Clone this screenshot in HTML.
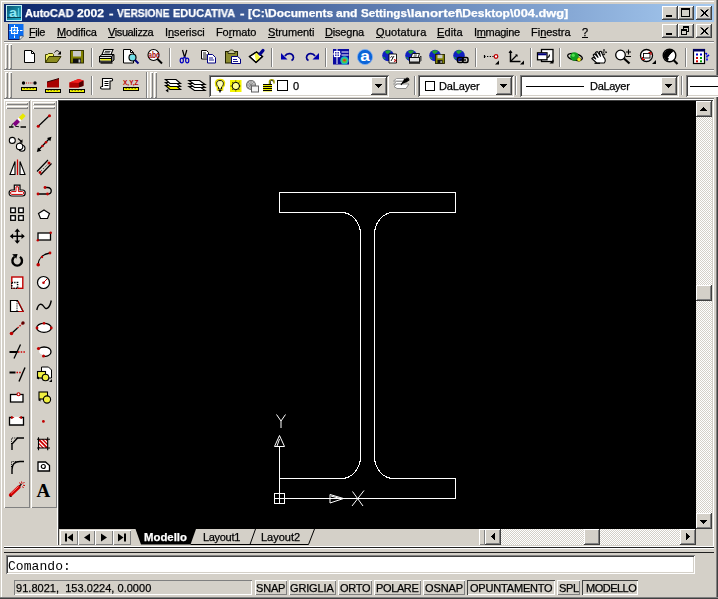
<!DOCTYPE html>
<html lang="it"><head><meta charset="utf-8"><title>AutoCAD 2002</title><style>
html,body{margin:0;padding:0;}
body{width:718px;height:599px;overflow:hidden;background:#D4D0C8;position:relative;font-family:"Liberation Sans",sans-serif;font-size:11px;}
div{position:absolute;box-sizing:border-box;}
svg.ic{position:absolute;overflow:visible;}
span.t{position:absolute;white-space:pre;will-change:transform;-webkit-text-stroke:0.25px currentColor;}
u{text-decoration:underline;}
</style></head>
<body>
<div class="frame" style="left:0px;top:0px;width:718px;height:599px;background:#D4D0C8;box-shadow:inset 1px 1px 0 #D4D0C8, inset 2px 2px 0 #fff;"></div>
<div style="left:714px;top:0px;width:4px;height:599px;background:#D4D0C8;box-shadow:inset -1px 0 0 #404040, inset -2px 0 0 #808080;"></div>
<div style="left:0px;top:597px;width:718px;height:2px;background:#808080;border-bottom:1px solid #404040;"></div>
<div class="title" style="left:4px;top:4px;width:710px;height:18px;background:linear-gradient(90deg,#0A246A,#A6CAF0);"></div>
<svg class="ic" style="left:6px;top:5px" width="16" height="16" viewBox="0 0 16 16"><defs><linearGradient id="ag" x1="0" y1="0" x2="1" y2="1"><stop offset="0" stop-color="#0A5470"/><stop offset="1" stop-color="#20B0CC"/></linearGradient></defs><rect x="0" y="0" width="16" height="16" fill="#BFEFF6"/><rect x="1" y="1" width="14" height="14" fill="url(#ag)"/><path d="M1 12.500h14" stroke="#0A4050" stroke-width="1"/><text x="3" y="12" font-family="Liberation Sans, sans-serif" font-weight="bold" font-size="13" textLength="8" lengthAdjust="spacingAndGlyphs" fill="#8FE8F4">a</text><path d="M12.500 3v9" stroke="#50C8DC" stroke-width="1.200"/></svg>
<span id="t0" class="t" style="left:24.5px;top:5.19px;font-size:11px;line-height:16px;color:#fff;letter-spacing:0.000px;font-weight:bold;transform:scaleX(0.9920);transform-origin:0 0;">AutoCAD</span>
<span id="t1" class="t" style="left:77px;top:5.19px;font-size:11px;line-height:16px;color:#fff;letter-spacing:0.000px;font-weight:bold;transform:scaleX(1.1027);transform-origin:0 0;">2002</span>
<span id="t2" class="t" style="left:108.5px;top:5.19px;font-size:11px;line-height:16px;color:#fff;letter-spacing:0.000px;font-weight:bold;transform:scaleX(1.2255);transform-origin:0 0;">-</span>
<span id="t3" class="t" style="left:116.5px;top:5.19px;font-size:11px;line-height:16px;color:#fff;letter-spacing:0.000px;font-weight:bold;transform:scaleX(0.9233);transform-origin:0 0;">VERSIONE</span>
<span id="t4" class="t" style="left:173px;top:5.19px;font-size:11px;line-height:16px;color:#fff;letter-spacing:0.000px;font-weight:bold;transform:scaleX(0.9945);transform-origin:0 0;">EDUCATIVA</span>
<span id="t5" class="t" style="left:240px;top:5.19px;font-size:11px;line-height:16px;color:#fff;letter-spacing:0.000px;font-weight:bold;transform:scaleX(1.2255);transform-origin:0 0;">-</span>
<span id="t6" class="t" style="left:247.7px;top:5.19px;font-size:11px;line-height:16px;color:#fff;letter-spacing:0.000px;font-weight:bold;transform:scaleX(1.0903);transform-origin:0 0;">[C:\Documents</span>
<span id="t7" class="t" style="left:335.5px;top:5.19px;font-size:11px;line-height:16px;color:#fff;letter-spacing:0.000px;font-weight:bold;transform:scaleX(1.0990);transform-origin:0 0;">and</span>
<span id="t8" class="t" style="left:360.6px;top:5.19px;font-size:11px;line-height:16px;color:#fff;letter-spacing:0.000px;font-weight:bold;transform:scaleX(1.0575);transform-origin:0 0;">Settings</span>
<span id="t9" class="t" style="left:406.5px;top:5.19px;font-size:11px;line-height:16px;color:#fff;letter-spacing:0.000px;font-weight:bold;transform:scaleX(1.2095);transform-origin:0 0;">\lanortef</span>
<span id="t10" class="t" style="left:459px;top:5.19px;font-size:11px;line-height:16px;color:#fff;letter-spacing:0.000px;font-weight:bold;transform:scaleX(1.0975);transform-origin:0 0;">\Desktop</span>
<span id="t11" class="t" style="left:510px;top:5.19px;font-size:11px;line-height:16px;color:#fff;letter-spacing:0.000px;font-weight:bold;transform:scaleX(1.1631);transform-origin:0 0;">\004.dwg]</span>
<div style="left:662px;top:6px;width:16px;height:14px;background:#D4D0C8;box-shadow:inset -1px -1px 0 #404040, inset 1px 1px 0 #fff, inset -2px -2px 0 #808080;"></div>
<svg class="ic" style="left:662px;top:6px" width="16" height="14" viewBox="0 0 16 14"><rect x="4" y="9" width="6" height="2" fill="#000" shape-rendering="crispEdges"/></svg>
<div style="left:678px;top:6px;width:16px;height:14px;background:#D4D0C8;box-shadow:inset -1px -1px 0 #404040, inset 1px 1px 0 #fff, inset -2px -2px 0 #808080;"></div>
<svg class="ic" style="left:678px;top:6px" width="16" height="14" viewBox="0 0 16 14"><path d="M3 2h9v9h-9z M4 4v6h7v-6z" fill="#000" fill-rule="evenodd" shape-rendering="crispEdges"/></svg>
<div style="left:696px;top:6px;width:16px;height:14px;background:#D4D0C8;box-shadow:inset -1px -1px 0 #404040, inset 1px 1px 0 #fff, inset -2px -2px 0 #808080;"></div>
<svg class="ic" style="left:696px;top:6px" width="16" height="14" viewBox="0 0 16 14"><path d="M4.5 3.5l7 7M5.5 3.5l7 7M11.5 3.5l-7 7M12.5 3.5l-7 7" stroke="#000" stroke-width="1" fill="none"/></svg>
<div class="menubar" style="left:4px;top:22px;width:710px;height:20px;background:#D4D0C8;"></div>
<svg class="ic" style="left:8px;top:24px" width="16" height="16" viewBox="0 0 16 16"><path d="M0 0h15.500v12l-4 4h-11.500z" fill="#0A6CF0"/><path d="M0.500 0v15.500h11" fill="none" stroke="#101860" stroke-width="1"/><path d="M3.500 3.500h6v6h-6z" fill="#2A8CFF" stroke="#fff" stroke-width="1.100"/><path d="M6.500 1v14M1.500 6.500h13" stroke="#fff" stroke-width="1" stroke-dasharray="2.500 1"/><path d="M11.500 16v-4h4z" fill="#F0F0F0" stroke="#404040" stroke-width="0.600"/></svg>
<span id="t12" class="t" style="left:28.5px;top:24.19px;font-size:11px;line-height:16px;color:#000;letter-spacing:-0.438px;"><u>F</u>ile</span>
<span id="t13" class="t" style="left:56.5px;top:24.19px;font-size:11px;line-height:16px;color:#000;letter-spacing:-0.146px;"><u>M</u>odifica</span>
<span id="t14" class="t" style="left:107.7px;top:24.19px;font-size:11px;line-height:16px;color:#000;letter-spacing:-0.403px;"><u>V</u>isualizza</span>
<span id="t15" class="t" style="left:165px;top:24.19px;font-size:11px;line-height:16px;color:#000;letter-spacing:-0.073px;">I<u>n</u>serisci</span>
<span id="t16" class="t" style="left:215.7px;top:24.19px;font-size:11px;line-height:16px;color:#000;letter-spacing:-0.098px;">Fo<u>r</u>mato</span>
<span id="t17" class="t" style="left:267.5px;top:24.19px;font-size:11px;line-height:16px;color:#000;letter-spacing:-0.066px;"><u>S</u>trumenti</span>
<span id="t18" class="t" style="left:325px;top:24.19px;font-size:11px;line-height:16px;color:#000;letter-spacing:-0.196px;"><u>D</u>isegna</span>
<span id="t19" class="t" style="left:375.5px;top:24.19px;font-size:11px;line-height:16px;color:#000;letter-spacing:0.174px;"><u>Q</u>uotatura</span>
<span id="t20" class="t" style="left:436.8px;top:24.19px;font-size:11px;line-height:16px;color:#000;letter-spacing:0.121px;"><u>E</u>dita</span>
<span id="t21" class="t" style="left:473.9px;top:24.19px;font-size:11px;line-height:16px;color:#000;letter-spacing:-0.314px;">I<u>m</u>magine</span>
<span id="t22" class="t" style="left:531.4px;top:24.19px;font-size:11px;line-height:16px;color:#000;letter-spacing:-0.021px;">Fi<u>n</u>estra</span>
<span id="t23" class="t" style="left:582px;top:24.19px;font-size:11px;line-height:16px;color:#000;letter-spacing:-0.125px;"><u>?</u></span>
<div style="left:662px;top:24px;width:16px;height:14px;background:#D4D0C8;box-shadow:inset -1px -1px 0 #404040, inset 1px 1px 0 #fff, inset -2px -2px 0 #808080;"></div>
<svg class="ic" style="left:662px;top:24px" width="16" height="14" viewBox="0 0 16 14"><rect x="4" y="9" width="6" height="2" fill="#000" shape-rendering="crispEdges"/></svg>
<div style="left:678px;top:24px;width:16px;height:14px;background:#D4D0C8;box-shadow:inset -1px -1px 0 #404040, inset 1px 1px 0 #fff, inset -2px -2px 0 #808080;"></div>
<svg class="ic" style="left:678px;top:24px" width="16" height="14" viewBox="0 0 16 14"><path d="M5 2h6v6h-6z M6 4v3h4v-3z" fill="#000" fill-rule="evenodd" shape-rendering="crispEdges"/><path d="M3 5h6v6h-6z M4 7v3h4v-3z" fill="#000" fill-rule="evenodd" shape-rendering="crispEdges"/><rect x="4" y="7" width="4" height="3" fill="#D4D0C8" shape-rendering="crispEdges"/></svg>
<div style="left:696px;top:24px;width:16px;height:14px;background:#D4D0C8;box-shadow:inset -1px -1px 0 #404040, inset 1px 1px 0 #fff, inset -2px -2px 0 #808080;"></div>
<svg class="ic" style="left:696px;top:24px" width="16" height="14" viewBox="0 0 16 14"><path d="M4.5 3.5l7 7M5.5 3.5l7 7M11.5 3.5l-7 7M12.5 3.5l-7 7" stroke="#000" stroke-width="1" fill="none"/></svg>
<div style="left:4px;top:41px;width:710px;height:1px;background:#808080"></div>
<div style="left:4px;top:42px;width:710px;height:1px;background:#fff"></div>
<div style="left:5px;top:44px;width:3px;height:25px;box-shadow:inset 1px 1px 0 #fff, inset -1px -1px 0 #808080;"></div>
<div style="left:9px;top:44px;width:3px;height:25px;box-shadow:inset 1px 1px 0 #fff, inset -1px -1px 0 #808080;"></div>
<svg class="ic" style="left:22px;top:49px" width="16" height="16" viewBox="0 0 16 16"><path d="M2.5 1.5h7l3 3v9h-10z" fill="#fff" stroke="#000"/><path d="M9.5 1.5v3h3" fill="none" stroke="#000"/></svg>
<svg class="ic" style="left:45px;top:49px" width="16" height="16" viewBox="0 0 16 16"><path d="M0.5 13.5v-8h2l1-1h4l1 1v2" fill="#F0F060" stroke="#404000"/><path d="M0.5 13.5l3.5-6h12l-4 6z" fill="#8C8C20" stroke="#303000"/><path d="M9.5 3.5c1.5-2.5 4-2.5 5 0" fill="none" stroke="#000"/><path d="M16 2v3.5h-3.5z" fill="#000"/></svg>
<svg class="ic" style="left:69px;top:49px" width="16" height="16" viewBox="0 0 16 16"><rect x="1.5" y="1.5" width="13" height="12.500" fill="#808000" stroke="#303000"/><rect x="4" y="2" width="8" height="5.500" fill="#C8C8C8"/><rect x="4" y="9.500" width="8" height="4.500" fill="#101010"/><rect x="9.500" y="10.500" width="1.800" height="3" fill="#C0C0C0"/></svg>
<svg class="ic" style="left:99px;top:49px" width="16" height="16" viewBox="0 0 16 16"><path d="M5 0.500h9l-2 5h-9z" fill="#fff" stroke="#000" stroke-width="1.100"/><path d="M6 2.300h5.500M5.300 3.900h5.500" stroke="#000" stroke-width="0.900"/><path d="M0.500 7.500l2.500-2h12l-2.500 2z" fill="#C8C8C8" stroke="#000" stroke-width="1"/><rect x="0.500" y="7.500" width="12" height="5.500" fill="#E4E4E4" stroke="#000" stroke-width="1"/><path d="M12.500 7.500l2.500-2v5.500l-2.500 2z" fill="#808080" stroke="#000" stroke-width="1"/><path d="M1 9.500h11M1 12h11" stroke="#000" stroke-width="1"/><path d="M1.500 10.750h10.500" stroke="#F0F000" stroke-width="1.300"/><path d="M1.500 14h12" stroke="#000" stroke-width="1.300"/></svg>
<svg class="ic" style="left:123px;top:49px" width="16" height="16" viewBox="0 0 16 16"><path d="M0.500 0.500h7l3 3v10.500h-10z" fill="#fff" stroke="#000"/><path d="M7.500 0.500v3h3" fill="none" stroke="#000"/><circle cx="9.500" cy="8.500" r="3.500" fill="#70E0E8" stroke="#000" stroke-width="1.200"/><path d="M12 11l3.500 3.500" stroke="#000080" stroke-width="2"/></svg>
<svg class="ic" style="left:147px;top:49px" width="16" height="16" viewBox="0 0 16 16"><circle cx="6.500" cy="6" r="5.500" fill="#fff" stroke="#000" stroke-width="1.100"/><path d="M10.500 10l4.500 4.500" stroke="#000" stroke-width="2"/><text x="1.200" y="9" font-family="Liberation Sans, sans-serif" font-weight="bold" font-size="8.500" fill="#A00000" textLength="11.500" lengthAdjust="spacingAndGlyphs">abc</text></svg>
<svg class="ic" style="left:177px;top:49px" width="16" height="16" viewBox="0 0 16 16"><path d="M5.500 1l2.300 8M9.800 1l-2.300 8" stroke="#000" stroke-width="1.200" fill="none"/><ellipse cx="4.800" cy="11.500" rx="1.600" ry="2.300" fill="none" stroke="#0000C0" stroke-width="1.200"/><ellipse cx="10.200" cy="11.500" rx="1.600" ry="2.300" fill="none" stroke="#0000C0" stroke-width="1.200"/><path d="M6 9.500l1.500-1.500 1.500 1.500" stroke="#0000C0" stroke-width="1.200" fill="none"/></svg>
<svg class="ic" style="left:201px;top:49px" width="16" height="16" viewBox="0 0 16 16"><path d="M0.500 1.500h5l2 2v6.500h-7z" fill="#fff" stroke="#000"/><path d="M2 4h3M2 6h4M2 8h4" stroke="#000" stroke-width="0.900"/><path d="M6.500 5.500h5l3 3v5.500h-8z" fill="#fff" stroke="#000080"/><path d="M8 9h4M8 11h5" stroke="#000080" stroke-width="0.900"/></svg>
<svg class="ic" style="left:225px;top:49px" width="16" height="16" viewBox="0 0 16 16"><rect x="0.500" y="2.500" width="12" height="11.500" fill="#8C8C30" stroke="#202000"/><path d="M4 2.500c0-2 5-2 5 0h1v2h-7v-2z" fill="#C8C8A0" stroke="#202000" stroke-width="0.800"/><path d="M6.500 7.500h6l3 2.500v4.500h-9z" fill="#fff" stroke="#000080"/><path d="M8 10.500h4M8 12.500h5" stroke="#000080" stroke-width="0.900"/></svg>
<svg class="ic" style="left:249px;top:49px" width="16" height="16" viewBox="0 0 16 16"><path d="M0.500 7.500L7.500 3l6 4.500L7 13.500z" fill="#fff" stroke="#000" stroke-width="1.200"/><path d="M5.500 5l2.500-1.300 3.200 5.300-4 3.800z" fill="#F4F440"/><path d="M0.500 7.500L7.500 3l6 4.500L7 13.500z" fill="none" stroke="#000" stroke-width="1.200"/><path d="M11 5l3-3.500" stroke="#000090" stroke-width="3.200" stroke-linecap="round"/></svg>
<svg class="ic" style="left:280px;top:49px" width="16" height="16" viewBox="0 0 16 16"><path d="M1 4v6.500h6.500z" fill="#0000B0"/><path d="M5 7c2-3.500 8-3.500 8.500 1.500 0 1.500-1 2.500-2 3" fill="none" stroke="#000090" stroke-width="1.700"/></svg>
<svg class="ic" style="left:304px;top:49px" width="16" height="16" viewBox="0 0 16 16"><path d="M15 4v6.500h-6.500z" fill="#0000B0"/><path d="M11 7c-2-3.500-8-3.500-8.500 1.500 0 1.500 1 2.500 2 3" fill="none" stroke="#000090" stroke-width="1.700"/></svg>
<svg class="ic" style="left:333px;top:49px" width="16" height="16" viewBox="0 0 16 16"><rect x="0" y="0" width="16" height="15.500" fill="#0A0AA0"/><rect x="1.500" y="2.500" width="5" height="5" fill="none" stroke="#fff" stroke-width="1.200"/><path d="M4 0v15M0 5h8M8.500 3h7M8.500 6h7" stroke="#fff" stroke-width="1"/><circle cx="11.500" cy="11.500" r="4.200" fill="#20B0C0"/><circle cx="11.500" cy="11.500" r="2.600" fill="#50D040"/><circle cx="11.500" cy="11.300" r="1.300" fill="#E04020"/></svg>
<svg class="ic" style="left:357px;top:49px" width="16" height="16" viewBox="0 0 16 16"><circle cx="8" cy="8" r="7.600" fill="#0A64D8"/><circle cx="8" cy="8" r="7.600" fill="none" stroke="#80B0F0" stroke-width="0.800"/><text x="3.200" y="12.300" font-family="Liberation Sans, sans-serif" font-weight="bold" font-size="14" textLength="9.600" lengthAdjust="spacingAndGlyphs" fill="#fff">a</text></svg>
<svg class="ic" style="left:382px;top:49px" width="16" height="16" viewBox="0 0 16 16"><circle cx="6" cy="6.500" r="5.800" fill="#1020C0"/><path d="M3 2.500c2-2 5-1.500 6 0-1 1.500-2 1-3 2.500-1.500 0-2-1-3-2.500z" fill="#20A030"/><path d="M1 8c1.500-0.500 2.500 1 2.500 2.500-1-0.500-2-1-2.500-2.500z" fill="#20A030"/><path d="M7 5h7.500v9h-7.500z" fill="#fff" stroke="#000" stroke-width="0.900"/><path d="M9 12l3-5M8.500 8.500c1-1.500 2-1 2 0" stroke="#000" stroke-width="0.900" fill="none"/><path d="M12 10l2.500 3M14.500 10l-2.500 3" stroke="#C00000" stroke-width="0.900"/></svg>
<svg class="ic" style="left:405px;top:49px" width="16" height="16" viewBox="0 0 16 16"><circle cx="6" cy="6.500" r="5.800" fill="#1020C0"/><path d="M3 2.500c2-2 5-1.500 6 0-1 1.500-2 1-3 2.500-1.500 0-2-1-3-2.500z" fill="#20A030"/><path d="M1 8c1.500-0.500 2.500 1 2.500 2.500-1-0.500-2-1-2.500-2.500z" fill="#20A030"/><path d="M6 8.500l1.500-4h7l-1.500 4z" fill="#fff" stroke="#000" stroke-width="0.900"/><rect x="4.500" y="8.500" width="10" height="4.500" fill="#E0E0E0" stroke="#000" stroke-width="0.900"/><path d="M14.500 8.500l1.500-1.500v4.500l-1.500 1.500z" fill="#888" stroke="#000" stroke-width="0.700"/><path d="M4 14h11" stroke="#000" stroke-width="1.400"/><path d="M9 6h3M8.500 7.200h3" stroke="#000" stroke-width="0.600"/></svg>
<svg class="ic" style="left:429px;top:49px" width="16" height="16" viewBox="0 0 16 16"><circle cx="6" cy="6.500" r="5.800" fill="#1020C0"/><path d="M3 2.500c2-2 5-1.500 6 0-1 1.500-2 1-3 2.500-1.500 0-2-1-3-2.500z" fill="#20A030"/><path d="M1 8c1.500-0.500 2.500 1 2.500 2.500-1-0.500-2-1-2.500-2.500z" fill="#20A030"/><rect x="6.500" y="5.500" width="9" height="9" fill="#808000" stroke="#202000" stroke-width="0.900"/><rect x="8.500" y="5.800" width="5" height="3.500" fill="#C8C8C8"/><rect x="8.500" y="11" width="5" height="3.500" fill="#101010"/><rect x="11.500" y="11.800" width="1.200" height="2.200" fill="#C0C0C0"/></svg>
<svg class="ic" style="left:453px;top:49px" width="16" height="16" viewBox="0 0 16 16"><circle cx="6" cy="6.500" r="5.800" fill="#1020C0"/><path d="M3 2.500c2-2 5-1.500 6 0-1 1.500-2 1-3 2.500-1.500 0-2-1-3-2.500z" fill="#20A030"/><path d="M1 8c1.500-0.500 2.500 1 2.500 2.500-1-0.500-2-1-2.500-2.500z" fill="#20A030"/><rect x="4.500" y="8.500" width="5.500" height="5" rx="1.500" fill="none" stroke="#000" stroke-width="1.500"/><rect x="9.500" y="8.500" width="5.500" height="5" rx="1.500" fill="none" stroke="#000" stroke-width="1.500"/><path d="M6.500 11h6.500" stroke="#000" stroke-width="1.400"/></svg>
<svg class="ic" style="left:483px;top:49px" width="16" height="16" viewBox="0 0 16 16"><path d="M1 7.500h1.500M4 7.500h1.300M6.700 7.500h1.300M9.400 7.500h1.300" stroke="#000" stroke-width="1.200"/><path d="M1.500 6v3" stroke="#000" stroke-width="1.200"/><circle cx="13" cy="7.500" r="1.800" fill="#fff" stroke="#C00000" stroke-width="1.300"/><path d="M16 11.500v4h-4z" fill="#000"/></svg>
<svg class="ic" style="left:508px;top:49px" width="16" height="16" viewBox="0 0 16 16"><path d="M2.500 2v10.500h10" fill="none" stroke="#000" stroke-width="1.500"/><path d="M0.500 4l2-3 2 3z" fill="#000"/><path d="M3 12l6-6" stroke="#000" stroke-width="1.200"/><path d="M7 5.500h2.500v2.500z" fill="#000"/><path d="M16 11.500v4h-4z" fill="#000"/></svg>
<svg class="ic" style="left:537px;top:49px" width="16" height="16" viewBox="0 0 16 16"><rect x="4.500" y="0.500" width="11.500" height="12" fill="#fff" stroke="#000" stroke-width="1.300"/><rect x="0.500" y="3.800" width="9.500" height="7" fill="#fff" stroke="#000" stroke-width="1.300"/><rect x="1" y="4.300" width="8.500" height="2" fill="#000080"/><path d="M10 8.500c2 0 2.500-1 2.500-3" fill="none" stroke="#000" stroke-width="1.100"/><path d="M16.500 10.500v4h-4z" fill="#000"/></svg>
<svg class="ic" style="left:567px;top:49px" width="16" height="16" viewBox="0 0 16 16"><ellipse cx="8" cy="8" rx="7.500" ry="3.200" fill="none" stroke="#000" stroke-width="1.300" transform="rotate(12 8 8)"/><circle cx="7.500" cy="7.500" r="4.300" fill="#10A020"/><circle cx="6.300" cy="6.300" r="1.600" fill="#50E050"/><circle cx="12" cy="10.500" r="2" fill="#F0F020" stroke="#404000" stroke-width="0.500"/></svg>
<svg class="ic" style="left:591px;top:49px" width="16" height="16" viewBox="0 0 16 16"><path d="M0.800 9.500l1.700-1.300 2.300 1.800-2.600-4 1.500-1.200 3.300 3.500-2.500-4.800 1.700-1 3.300 4.800-1.300-4.500 1.800-0.500 2.500 5.500c2 2 2.300 4.200 0.700 6.200h-7.500z" fill="#fff" stroke="#000" stroke-width="1.100" stroke-linejoin="round"/><path d="M3.500 14.300h5.500" stroke="#000" stroke-width="1.200"/><path d="M13 0.500v5.500M10.200 3.200h5.600" stroke="#000" stroke-width="0.900" stroke-dasharray="1 0.800"/><path d="M13 0l-1.200 1.500h2.400zM13 6.500l-1.200-1.500h2.400zM9.800 3.200l1.500-1.200v2.400zM16.200 3.200l-1.500-1.200v2.400z" fill="#000"/></svg>
<svg class="ic" style="left:615px;top:49px" width="16" height="16" viewBox="0 0 16 16"><circle cx="5.500" cy="6" r="4.800" fill="#fff" stroke="#000" stroke-width="1.300"/><path d="M9 9.500l5.500 5" stroke="#000" stroke-width="2.200"/><path d="M11 3h5M13.500 0.500v5M11 7.500h5" stroke="#000" stroke-width="1.100"/></svg>
<svg class="ic" style="left:640px;top:49px" width="16" height="16" viewBox="0 0 16 16"><circle cx="6.500" cy="6.500" r="6" fill="#fff" stroke="#000" stroke-width="1.300"/><rect x="3.500" y="4.500" width="6.500" height="4.500" fill="none" stroke="#000" stroke-width="0.900"/><path d="M8.500 3.500h2.500v2.500M2.500 8v2.500h2.500" fill="none" stroke="#D00000" stroke-width="1.100"/><path d="M16 11v4h-4z" fill="#000"/></svg>
<svg class="ic" style="left:662px;top:49px" width="16" height="16" viewBox="0 0 16 16"><circle cx="7.500" cy="6.500" r="6.300" fill="#fff" stroke="#000" stroke-width="1.400"/><path d="M7.500 6.500l4-4.500a6 6 0 0 0-9.500 6.500c1 2 2.500 3.500 4 3.500z" fill="#000"/><path d="M6 9l4-5" stroke="#fff" stroke-width="1"/><path d="M11.500 11l4 4" stroke="#000" stroke-width="2.200"/></svg>
<svg class="ic" style="left:693px;top:49px" width="16" height="16" viewBox="0 0 16 16"><rect x="0.500" y="0.500" width="11" height="14" fill="#fff" stroke="#000" stroke-width="1.200"/><rect x="0" y="0" width="12" height="2.500" fill="#000060"/><rect x="3" y="4.500" width="2" height="2" fill="#0000D0"/><rect x="7" y="4.500" width="2" height="2" fill="#0000D0"/><rect x="3" y="8" width="2" height="2" fill="#D00000"/><rect x="7" y="8" width="2" height="2" fill="#00A000"/><rect x="3" y="11.300" width="2" height="2" fill="#D00000"/><rect x="7" y="11.300" width="2" height="2" fill="#00A000"/><path d="M12.500 4l3.500 3M14 6.500v6" stroke="#0000E0" stroke-width="1.600" stroke-dasharray="2 1"/></svg>
<div style="left:91px;top:48px;width:2px;height:19px;border-left:1px solid #808080;border-right:1px solid #fff;"></div>
<div style="left:169px;top:48px;width:2px;height:19px;border-left:1px solid #808080;border-right:1px solid #fff;"></div>
<div style="left:271px;top:48px;width:2px;height:19px;border-left:1px solid #808080;border-right:1px solid #fff;"></div>
<div style="left:325px;top:48px;width:2px;height:19px;border-left:1px solid #808080;border-right:1px solid #fff;"></div>
<div style="left:475px;top:48px;width:2px;height:19px;border-left:1px solid #808080;border-right:1px solid #fff;"></div>
<div style="left:530px;top:48px;width:2px;height:19px;border-left:1px solid #808080;border-right:1px solid #fff;"></div>
<div style="left:559px;top:48px;width:2px;height:19px;border-left:1px solid #808080;border-right:1px solid #fff;"></div>
<div style="left:685px;top:48px;width:2px;height:19px;border-left:1px solid #808080;border-right:1px solid #fff;"></div>
<div style="left:4px;top:69px;width:710px;height:1px;background:#808080"></div>
<div style="left:4px;top:70px;width:710px;height:1px;background:#fff"></div>
<div style="left:5px;top:72px;width:3px;height:26px;box-shadow:inset 1px 1px 0 #fff, inset -1px -1px 0 #808080;"></div>
<div style="left:9px;top:72px;width:3px;height:26px;box-shadow:inset 1px 1px 0 #fff, inset -1px -1px 0 #808080;"></div>
<div style="left:146px;top:72px;width:2px;height:26px;border-left:1px solid #808080;border-right:1px solid #fff;"></div>
<svg class="ic" style="left:21px;top:77px" width="16" height="16" viewBox="0 0 16 16"><circle cx="2.500" cy="6" r="1.700" fill="#000"/><circle cx="14" cy="6" r="1.700" fill="#000"/><path d="M5 6h7" stroke="#C00000" stroke-width="1.200" stroke-dasharray="1 1.200"/><rect x="0.5" y="10.5" width="15" height="3" fill="#F0F000" stroke="#000" stroke-width="1"/><path d="M2.5 11.5h11" stroke="#808000" stroke-width="1" stroke-dasharray="1.500 1.500"/></svg>
<svg class="ic" style="left:45px;top:77px" width="16" height="16" viewBox="0 0 16 16"><path d="M2 10.500v-5.500l12-3.500v9z" fill="#A80000"/><path d="M2 5l12-3.500" stroke="#300000" stroke-width="1"/><rect x="0.5" y="12.5" width="15" height="3" fill="#F0F000" stroke="#000" stroke-width="1"/><path d="M2.5 13.5h11" stroke="#808000" stroke-width="1" stroke-dasharray="1.500 1.500"/></svg>
<svg class="ic" style="left:69px;top:77px" width="16" height="16" viewBox="0 0 16 16"><path d="M0.500 10.500v-5l9-3.500 5 1.500v5l-5 2z" fill="#E00000"/><path d="M0.500 5.500l9-3.500 5 1.500-5 2.500z" fill="#F02020"/><path d="M9.500 6l5-2.500v5.500l-5 1.500z" fill="#500000"/><path d="M0.500 5.500v5h9v-4.500z" fill="#B00000"/><rect x="0.5" y="12.5" width="15" height="3" fill="#F0F000" stroke="#000" stroke-width="1"/><path d="M2.5 13.5h11" stroke="#808000" stroke-width="1" stroke-dasharray="1.500 1.500"/></svg>
<svg class="ic" style="left:99px;top:77px" width="16" height="16" viewBox="0 0 16 16"><path d="M3.500 1.500h9c1.500 0 1.500 2.500 0 2.500h-1.500v8h-8c-2 0-2-2.500 0-2.500h0.500z" fill="#fff" stroke="#000" stroke-width="1.100"/><path d="M5.500 4.500h4M5.500 6.500h4M5.500 8.500h4" stroke="#000" stroke-width="1"/></svg>
<svg class="ic" style="left:123px;top:77px" width="16" height="16" viewBox="0 0 16 16"><text x="0" y="7.500" font-family="Liberation Sans, sans-serif" font-weight="bold" font-size="7" fill="#C00000" textLength="15.500" lengthAdjust="spacingAndGlyphs">X,Y,Z</text><rect x="0.5" y="10.5" width="15" height="3" fill="#F0F000" stroke="#000" stroke-width="1"/><path d="M2.5 11.5h11" stroke="#808000" stroke-width="1" stroke-dasharray="1.500 1.500"/></svg>
<div style="left:91px;top:76px;width:2px;height:19px;border-left:1px solid #808080;border-right:1px solid #fff;"></div>
<div style="left:150px;top:72px;width:3px;height:26px;box-shadow:inset 1px 1px 0 #fff, inset -1px -1px 0 #808080;"></div>
<div style="left:154px;top:72px;width:3px;height:26px;box-shadow:inset 1px 1px 0 #fff, inset -1px -1px 0 #808080;"></div>
<div style="left:4px;top:98px;width:710px;height:1px;background:#808080"></div>
<div style="left:4px;top:99px;width:710px;height:1px;background:#fff"></div>
<svg class="ic" style="left:164px;top:77px" width="16" height="16" viewBox="0 0 16 16"><path d="M1.5 8.5h10.5l4.5 4h-10.5z" fill="#F4F400" stroke="#000" stroke-width="1.2"/><path d="M1.5 5.5h10.5l4.5 4h-10.5z" fill="#fff" stroke="#000" stroke-width="1.2"/><path d="M1.5 2.5h10.5l4.5 4h-10.5z" fill="#fff" stroke="#000" stroke-width="1.2"/><path d="M1.500 13.500l2.800-1.800v3.800z" fill="#000"/></svg>
<svg class="ic" style="left:188px;top:77px" width="16" height="16" viewBox="0 0 16 16"><path d="M1 9.5h10.5l5.5 4h-10.5z" fill="#fff" stroke="#000" stroke-width="1.2"/><path d="M1 6.5h10.5l5.5 4h-10.5z" fill="#fff" stroke="#000" stroke-width="1.2"/><path d="M1 3.5h10.5l5.5 4h-10.5z" fill="#fff" stroke="#000" stroke-width="1.2"/></svg>
<div style="left:209px;top:75px;width:180px;height:22px;background:#fff;box-shadow:inset 1px 1px 0 #808080, inset -1px -1px 0 #fff, inset 2px 2px 0 #404040, inset -2px -2px 0 #D4D0C8;"></div>
<svg class="ic" style="left:214px;top:78px" width="16" height="16" viewBox="0 0 16 16"><path d="M6 1.500c-6 0-5 6-2.500 8v2.500h5v-2.500c2.500-2 3.500-8-2.500-8z" fill="#FFFF60" stroke="#E8E000" stroke-width="1.600"/><path d="M6 2.500c-4.500 0-4 5-1.500 6.500v2h3v-2c2.500-1.500 3-6.500-1.500-6.500z" fill="#FFFFB0" stroke="#000" stroke-width="0.900"/><path d="M4.500 12.500h3M5 13.800h2" stroke="#000" stroke-width="1"/></svg>
<svg class="ic" style="left:229px;top:78px" width="16" height="16" viewBox="0 0 16 16"><rect x="1" y="2" width="11.500" height="12" fill="#F4F400"/><circle cx="6.800" cy="8" r="3.700" fill="#FFFF90" stroke="#000" stroke-width="1"/><path d="M6.800 2.500v2M6.800 11.500v2M1.500 8h2M10 8h2M3 4l1.500 1.500M10.500 4l-1.500 1.500M3 12l1.500-1.500M10.500 12l-1.500-1.500" stroke="#000" stroke-width="0.800" stroke-dasharray="1 0.600"/></svg>
<svg class="ic" style="left:245px;top:78px" width="16" height="16" viewBox="0 0 16 16"><circle cx="6" cy="7" r="4.500" fill="#C8C8C8" stroke="#707070" stroke-width="1.100"/><path d="M6 2.500v9M1.500 7h9M3 4l6 6M9 4l-6 6" stroke="#808080" stroke-width="0.700"/><rect x="6.500" y="8" width="7" height="6" fill="#F4F4F4" stroke="#606060" stroke-width="1"/></svg>
<svg class="ic" style="left:261px;top:78px" width="16" height="16" viewBox="0 0 16 16"><path d="M8.500 6v-2.500c0-2.500 4.500-2.500 4.500 0v2" fill="none" stroke="#A0A000" stroke-width="1.500"/><path d="M9.500 6v-2.500c0-1.500 2.500-1.500 2.500 0" fill="none" stroke="#000" stroke-width="0.700"/><rect x="2" y="6" width="9" height="7.500" fill="#E8E800"/><path d="M2 6.500h9M2 8.500h9M2 10.500h9M2 12.500h9" stroke="#000" stroke-width="1"/></svg>
<div style="left:277px;top:80px;width:11px;height:11px;background:#fff;border:1px solid #000;"></div>
<span id="t24" class="t" style="left:292.5px;top:78.19px;font-size:11px;line-height:16px;color:#000;letter-spacing:-0.125px;">0</span>
<div style="left:371px;top:77px;width:16px;height:18px;background:#D4D0C8;box-shadow:inset -1px -1px 0 #404040, inset 1px 1px 0 #fff, inset -2px -2px 0 #808080;"></div>
<svg class="ic" style="left:371px;top:77px" width="16" height="16" viewBox="0 0 16 16"><path d="M4 7h7v1h-7zM5 8h5v1h-5zM6 9h3v1h-3zM7 10h1v1h-1z" fill="#000" shape-rendering="crispEdges"/></svg>
<svg class="ic" style="left:393px;top:77px" width="16" height="16" viewBox="0 0 16 16"><path d="M0.500 4l3-2.500h9l-3 2.500z" fill="#fff" stroke="#909090" stroke-width="0.900"/><path d="M0.500 7l3-2.500h9l-3 2.500z" fill="#fff" stroke="#909090" stroke-width="0.900"/><path d="M1 9.500l3-2.500h12l-3 4.500h-9z" fill="#fff" stroke="#808080" stroke-width="0.900"/><path d="M8.500 7l3-5.500 4 0.500-1 3z" fill="#000"/><path d="M13 1.500c2-1 3.500 0.500 2.500 2.500" fill="none" stroke="#000" stroke-width="1.200"/><path d="M8 8l2-3" stroke="#000" stroke-width="1.200"/></svg>
<div style="left:414px;top:76px;width:2px;height:19px;border-left:1px solid #808080;border-right:1px solid #fff;"></div>
<div style="left:418px;top:75px;width:96px;height:22px;background:#fff;box-shadow:inset 1px 1px 0 #808080, inset -1px -1px 0 #fff, inset 2px 2px 0 #404040, inset -2px -2px 0 #D4D0C8;"></div>
<div style="left:425px;top:81px;width:10px;height:10px;background:#fff;border:1px solid #000;"></div>
<span id="t25" class="t" style="left:438.5px;top:78.19px;font-size:11px;line-height:16px;color:#000;letter-spacing:-0.154px;">DaLayer</span>
<div style="left:496px;top:77px;width:16px;height:18px;background:#D4D0C8;box-shadow:inset -1px -1px 0 #404040, inset 1px 1px 0 #fff, inset -2px -2px 0 #808080;"></div>
<svg class="ic" style="left:496px;top:77px" width="16" height="16" viewBox="0 0 16 16"><path d="M4 7h7v1h-7zM5 8h5v1h-5zM6 9h3v1h-3zM7 10h1v1h-1z" fill="#000" shape-rendering="crispEdges"/></svg>
<div style="left:515px;top:76px;width:2px;height:19px;border-left:1px solid #808080;border-right:1px solid #fff;"></div>
<div style="left:520px;top:75px;width:159px;height:22px;background:#fff;box-shadow:inset 1px 1px 0 #808080, inset -1px -1px 0 #fff, inset 2px 2px 0 #404040, inset -2px -2px 0 #D4D0C8;"></div>
<div style="left:526px;top:86px;width:58px;height:1px;background:#000"></div>
<span id="t26" class="t" style="left:589.5px;top:78.19px;font-size:11px;line-height:16px;color:#000;letter-spacing:-0.297px;">DaLayer</span>
<div style="left:661px;top:77px;width:16px;height:18px;background:#D4D0C8;box-shadow:inset -1px -1px 0 #404040, inset 1px 1px 0 #fff, inset -2px -2px 0 #808080;"></div>
<svg class="ic" style="left:661px;top:77px" width="16" height="16" viewBox="0 0 16 16"><path d="M4 7h7v1h-7zM5 8h5v1h-5zM6 9h3v1h-3zM7 10h1v1h-1z" fill="#000" shape-rendering="crispEdges"/></svg>
<div style="left:681px;top:76px;width:2px;height:19px;border-left:1px solid #808080;border-right:1px solid #fff;"></div>
<div style="left:686px;top:75px;width:40px;height:22px;background:#fff;box-shadow:inset 1px 1px 0 #808080, inset -1px -1px 0 #fff, inset 2px 2px 0 #404040, inset -2px -2px 0 #D4D0C8;"></div>
<div style="left:690px;top:86px;width:30px;height:1px;background:#000"></div>
<div style="left:4px;top:100px;width:26px;height:408px;background:#D4D0C8;box-shadow:inset 1px 1px 0 #fff, inset -1px -1px 0 #808080;"></div>
<div style="left:6px;top:102px;width:22px;height:3px;box-shadow:inset 1px 1px 0 #fff, inset -1px -1px 0 #808080;"></div>
<div style="left:6px;top:106px;width:22px;height:3px;box-shadow:inset 1px 1px 0 #fff, inset -1px -1px 0 #808080;"></div>
<div style="left:31px;top:100px;width:26px;height:408px;background:#D4D0C8;box-shadow:inset 1px 1px 0 #fff, inset -1px -1px 0 #808080;"></div>
<div style="left:33px;top:102px;width:22px;height:3px;box-shadow:inset 1px 1px 0 #fff, inset -1px -1px 0 #808080;"></div>
<div style="left:33px;top:106px;width:22px;height:3px;box-shadow:inset 1px 1px 0 #fff, inset -1px -1px 0 #808080;"></div>
<svg class="ic" style="left:9px;top:113px" width="16" height="16" viewBox="0 0 16 16"><path d="M0 14h4.500M11.500 14h5.500" stroke="#000" stroke-width="1.400"/><path d="M3.600 10.600L8.230 5.950 11.050 8.770 6.400 13.400z" fill="#800080"/><path d="M8.230 5.950L9.770 4.410 12.590 7.230 11.050 8.770z" fill="#fff"/><path d="M9.770 4.410L13.890 0.290 16.710 3.110 12.590 7.230z" fill="#E8E800"/><path d="M3.600 10.600l-1.200 3M6.400 13.400l3.500 0.300" stroke="#000" stroke-width="0.900"/></svg>
<svg class="ic" style="left:9px;top:136px" width="16" height="16" viewBox="0 0 16 16"><circle cx="3.300" cy="4.400" r="3" fill="#fff" stroke="#000" stroke-width="1.100"/><circle cx="13" cy="12.300" r="3" fill="#fff" stroke="#000" stroke-width="1.100"/><circle cx="10.600" cy="10.400" r="3.200" fill="#fff" stroke="#000" stroke-width="1.100"/><path d="M9 2.500l3.500 3" stroke="#000" stroke-width="1.100"/><path d="M13.500 3.200v3.500h-3.500z" fill="#000"/></svg>
<svg class="ic" style="left:9px;top:159px" width="16" height="16" viewBox="0 0 16 16"><path d="M6 15.500h-5l5-13z" fill="#fff" stroke="#000" stroke-width="1.100"/><path d="M11 15.500h5l-5-13z" fill="#fff" stroke="#000" stroke-width="1.100"/><path d="M8.500 0.500v15.500" stroke="#D00000" stroke-width="1.200"/></svg>
<svg class="ic" style="left:9px;top:182px" width="16" height="16" viewBox="0 0 16 16"><path d="M5.300 3.200h5.700v4.800h2.500c3.600 0 3.600 6 0 6h-10.700c-3.600 0-3.600-6 0-6h2.500z" fill="#fff" stroke="#000" stroke-width="1.200"/><path d="M7 4.800h2.400v4.800h4.200c1.600 0 1.600 2.800 0 2.800h-10.900c-1.600 0-1.600-2.800 0-2.800h4.300z" fill="#fff" stroke="#D00000" stroke-width="1"/></svg>
<svg class="ic" style="left:9px;top:205px" width="16" height="16" viewBox="0 0 16 16"><g fill="#fff" stroke="#000" stroke-width="1.300"><rect x="1.700" y="3" width="4.600" height="4.600"/><rect x="9.700" y="3" width="4.600" height="4.600"/><rect x="1.700" y="10.700" width="4.600" height="4.600"/><rect x="9.700" y="10.700" width="4.600" height="4.600"/></g></svg>
<svg class="ic" style="left:9px;top:228px" width="16" height="16" viewBox="0 0 16 16"><path d="M8.300 2v12.500M2 8.200h12.500" stroke="#000" stroke-width="1.500"/><path d="M8.300 0.500l-2.800 3.300h5.600zM8.300 15.800l-2.800-3.300h5.600zM0.800 8.200l3.300-2.800v5.600zM15.800 8.200l-3.300-2.800v5.600z" fill="#000"/></svg>
<svg class="ic" style="left:9px;top:251px" width="16" height="16" viewBox="0 0 16 16"><path d="M10.950 5.870A4.800 4.800 0 1 1 5.450 5.870" fill="none" stroke="#000" stroke-width="2.400"/><path d="M3.200 3.200L8.600 3 7.300 7.800z" fill="#000"/></svg>
<svg class="ic" style="left:9px;top:274px" width="16" height="16" viewBox="0 0 16 16"><rect x="2.800" y="3" width="11" height="11.300" fill="#fff" stroke="#C00000" stroke-width="1.400"/><rect x="2.800" y="8.600" width="5.800" height="5.700" fill="#fff" stroke="#000" stroke-width="1.500" stroke-dasharray="1.300 1.100"/></svg>
<svg class="ic" style="left:9px;top:297px" width="16" height="16" viewBox="0 0 16 16"><path d="M1.500 3.500h7l5.500 11h-12.500z" fill="#fff" stroke="#000" stroke-width="1.200"/><path d="M8 4v10.500" stroke="#000" stroke-width="1" stroke-dasharray="1.200 1"/><path d="M9 4l5.500 10.500h-5" fill="none" stroke="#C00000" stroke-width="1"/></svg>
<svg class="ic" style="left:9px;top:320px" width="16" height="16" viewBox="0 0 16 16"><path d="M2.500 13.500l6-5.500" stroke="#000" stroke-width="1.300"/><path d="M8.500 8l5-4.500" stroke="#C00000" stroke-width="1.400" stroke-dasharray="1.500 1.200"/><circle cx="2.500" cy="13.500" r="1.800" fill="#C00000"/><circle cx="14" cy="3" r="1.700" fill="#600000"/></svg>
<svg class="ic" style="left:9px;top:343px" width="16" height="16" viewBox="0 0 16 16"><path d="M0.500 9h8" stroke="#000" stroke-width="2"/><path d="M9 9h7" stroke="#D00000" stroke-width="1.600" stroke-dasharray="1.500 1.200"/><path d="M11.500 1.500l-6.500 14" stroke="#000" stroke-width="1.300"/></svg>
<svg class="ic" style="left:9px;top:366px" width="16" height="16" viewBox="0 0 16 16"><path d="M0.500 6.500h6" stroke="#000" stroke-width="2"/><path d="M7.500 6.500h5" stroke="#D00000" stroke-width="1.600" stroke-dasharray="1.500 1.200"/><path d="M16 1.500l-6 14" stroke="#000" stroke-width="1.400"/></svg>
<svg class="ic" style="left:9px;top:389px" width="16" height="16" viewBox="0 0 16 16"><rect x="1.500" y="5.500" width="12.500" height="7.500" fill="#fff" stroke="#000" stroke-width="1.300"/><circle cx="9.500" cy="5.300" r="1.500" fill="#fff" stroke="#C00000" stroke-width="1.100"/></svg>
<svg class="ic" style="left:9px;top:412px" width="16" height="16" viewBox="0 0 16 16"><path d="M4 5.500h-3.500v7.500h14v-7.500h-3.500" fill="#fff" stroke="#000" stroke-width="1.300"/><path d="M4 5.500h7" stroke="#fff" stroke-width="1.300"/><path d="M2 4l3.500 1.500-3.500 1.500zM13 4l-3.500 1.500 3.500 1.500z" fill="#C00000"/></svg>
<svg class="ic" style="left:9px;top:435px" width="16" height="16" viewBox="0 0 16 16"><path d="M15 3h-6.500l-5.500 6v6" fill="none" stroke="#000" stroke-width="1.400"/><path d="M2.500 9v-6h6" fill="none" stroke="#000" stroke-width="1" stroke-dasharray="1 1.200"/></svg>
<svg class="ic" style="left:9px;top:458px" width="16" height="16" viewBox="0 0 16 16"><path d="M15 3.500h-4c-5 0-8 3-8 8v4.500" fill="none" stroke="#000" stroke-width="1.400"/><path d="M2.500 9v-5.500h6" fill="none" stroke="#000" stroke-width="1" stroke-dasharray="1 1.200"/></svg>
<svg class="ic" style="left:9px;top:481px" width="16" height="16" viewBox="0 0 16 16"><path d="M1.500 14l8.500-8" stroke="#D00000" stroke-width="3.400" stroke-linecap="round"/><path d="M2 12.500l7.500-7" stroke="#FF8080" stroke-width="0.900"/><path d="M1 15l1.500 0.500" stroke="#000" stroke-width="1"/><path d="M10.500 5l2-2" stroke="#000" stroke-width="1.200"/><path d="M12.500 0.500l0.500 2M15.500 1l-1.500 1.500M16 4.500l-2-0.300M14.500 7l-1-1.500M10.500 1.500l1 1.500" stroke="#D00000" stroke-width="1" /></svg>
<svg class="ic" style="left:36px;top:113px" width="16" height="16" viewBox="0 0 16 16"><path d="M2 13.500l11.500-11" stroke="#000" stroke-width="1.200"/><circle cx="2.2" cy="13.2" r="1.5" fill="#C00000"/><circle cx="13.5" cy="2.8" r="1.5" fill="#C00000"/></svg>
<svg class="ic" style="left:36px;top:136px" width="16" height="16" viewBox="0 0 16 16"><path d="M2.500 14l11-11.500" stroke="#000" stroke-width="1.200"/><path d="M15.500 0.800l-4.500 1.200 3.300 3.300zM0.800 16l4.500-1.200-3.300-3.300z" fill="#000"/><circle cx="6.5" cy="10" r="1.3" fill="#C00000"/><circle cx="10" cy="6.3" r="1.3" fill="#C00000"/></svg>
<svg class="ic" style="left:36px;top:159px" width="16" height="16" viewBox="0 0 16 16"><path d="M1 12.500l11-11.500M4.500 16l11-11.500" stroke="#000" stroke-width="1.200"/><path d="M3.500 13.500l9-9" stroke="#000" stroke-width="0.800" stroke-dasharray="1 1.500"/><circle cx="4" cy="13.5" r="1.4" fill="#C00000"/><circle cx="13" cy="4" r="1.5" fill="#C00000"/></svg>
<svg class="ic" style="left:36px;top:182px" width="16" height="16" viewBox="0 0 16 16"><path d="M2 12h9.500c5 0 5-6.500 0-6.500h-2.500" fill="none" stroke="#000" stroke-width="1.300"/><circle cx="2" cy="12" r="1.4" fill="#C00000"/><circle cx="11.5" cy="12" r="1.4" fill="#C00000"/><circle cx="9" cy="5.5" r="1.4" fill="#C00000"/></svg>
<svg class="ic" style="left:36px;top:205px" width="16" height="16" viewBox="0 0 16 16"><path d="M8 5l5.500 3.500-2 5h-7l-2-5z" fill="#fff" stroke="#000" stroke-width="1.200"/></svg>
<svg class="ic" style="left:36px;top:228px" width="16" height="16" viewBox="0 0 16 16"><rect x="2" y="5" width="12.500" height="7" fill="#fff" stroke="#000" stroke-width="1.300"/><circle cx="1.8" cy="12.2" r="1.2" fill="#C00000"/><circle cx="14.7" cy="4.8" r="1.2" fill="#C00000"/></svg>
<svg class="ic" style="left:36px;top:251px" width="16" height="16" viewBox="0 0 16 16"><path d="M2 13.500c0.500-6 5-10.500 12-11.500" fill="none" stroke="#000" stroke-width="1.300"/><circle cx="2.2" cy="13.8" r="1.8" fill="#C00000"/><circle cx="14" cy="2" r="1.4" fill="#C00000"/><circle cx="6" cy="6" r="1.2" fill="#C00000"/></svg>
<svg class="ic" style="left:36px;top:274px" width="16" height="16" viewBox="0 0 16 16"><circle cx="7.500" cy="8.500" r="6" fill="#fff" stroke="#000" stroke-width="1.200"/><path d="M7.500 8.500l3.500-3.500" stroke="#C00000" stroke-width="1"/><circle cx="7.5" cy="8.8" r="1.3" fill="#C00000"/></svg>
<svg class="ic" style="left:36px;top:297px" width="16" height="16" viewBox="0 0 16 16"><path d="M0.800 13c1.500-7 5-7 7-3.500s5.500 3 7.500-6" fill="none" stroke="#000" stroke-width="1.400"/></svg>
<svg class="ic" style="left:36px;top:320px" width="16" height="16" viewBox="0 0 16 16"><ellipse cx="8" cy="7.800" rx="7.300" ry="4.500" fill="#fff" stroke="#000" stroke-width="1.200"/><circle cx="8" cy="3.3" r="1.4" fill="#C00000"/><circle cx="1" cy="8" r="1.4" fill="#C00000"/><circle cx="15.3" cy="8" r="1.4" fill="#C00000"/></svg>
<svg class="ic" style="left:36px;top:343px" width="16" height="16" viewBox="0 0 16 16"><path d="M3 5.500c5-3 12-1 12 3.500 0 3-4 5-8 4" fill="#fff" stroke="#000" stroke-width="1.300"/><ellipse cx="8.500" cy="8.500" rx="5.500" ry="3.500" fill="#fff"/><circle cx="2.5" cy="5.5" r="1.6" fill="#C00000"/><circle cx="7.5" cy="13" r="1.5" fill="#C00000"/></svg>
<svg class="ic" style="left:36px;top:366px" width="16" height="16" viewBox="0 0 16 16"><path d="M5.500 1h7l3 3v8h-10z" fill="#fff" stroke="#000" stroke-width="1"/><rect x="1.500" y="5.500" width="8" height="6.500" fill="#F0F040" stroke="#000" stroke-width="1.100"/><circle cx="9.500" cy="11.500" r="3.300" fill="#F0F040" stroke="#000" stroke-width="1.100"/><path d="M0.500 12l2.500-1.500v3zM16 16v-3l-3 3z" fill="#000"/></svg>
<svg class="ic" style="left:36px;top:389px" width="16" height="16" viewBox="0 0 16 16"><rect x="3" y="3" width="8.500" height="7" fill="#F0F040" stroke="#000" stroke-width="1.100"/><circle cx="11" cy="10.500" r="3.600" fill="#F0F040" stroke="#000" stroke-width="1.100"/><path d="M2 11l2.500-1.500v3z" fill="#000"/></svg>
<svg class="ic" style="left:36px;top:412px" width="16" height="16" viewBox="0 0 16 16"><circle cx="7.4" cy="9.4" r="1.4" fill="#C00000"/></svg>
<svg class="ic" style="left:36px;top:435px" width="16" height="16" viewBox="0 0 16 16"><rect x="2.500" y="4.200" width="9.200" height="8.800" fill="#D00000"/><path d="M2.500 6.500l6.500 6.500M2.500 10l3 3M4.500 4.200l7.200 7.200M8 4.200l3.700 3.700" stroke="#fff" stroke-width="1.200"/><path d="M2.500 2.200v13M11.700 2.200v13M1 4.200h13M1 13h13" stroke="#000" stroke-width="1.100"/></svg>
<svg class="ic" style="left:36px;top:458px" width="16" height="16" viewBox="0 0 16 16"><path d="M2 4h7.500l4 3.500v5.500h-11.500z" fill="#fff" stroke="#000" stroke-width="1.300"/><circle cx="7.300" cy="8.500" r="2" fill="#fff" stroke="#000" stroke-width="1.200"/></svg>
<svg class="ic" style="left:36px;top:481px" width="16" height="16" viewBox="0 0 16 16"><text x="7.400" y="15.800" font-family="Liberation Serif, serif" font-weight="bold" font-size="19" text-anchor="middle" fill="#000">A</text></svg>
<div class="canvas" style="left:59px;top:101px;width:637px;height:428px;background:#000;overflow:hidden;"><svg width="637" height="428" viewBox="59 101 637 428" style="position:absolute;left:0;top:0" shape-rendering="crispEdges">
<g fill="none" stroke="#fff" stroke-width="1">
<path d="M279.5 192.5H455.5V212.5H393.5A19 22 0 0 0 374.5 234.5V456.5A19 22 0 0 0 393.5 478.5H455.5V498.5H279.5V478.5H341.5A19 22 0 0 0 360.5 456.5V234.5A19 22 0 0 0 341.5 212.5H279.5Z"/>
<path d="M279.5 494V446.5"/>
<path d="M279.5 435.5L274.5 446.5H284.5Z M279.5 439L277 446" shape-rendering="auto"/>
<path d="M276.5 414.5L281 421L285.5 414.5M281 421V428" shape-rendering="auto"/>
<rect x="274.5" y="493.5" width="10" height="10"/>
<path d="M274.5 498.5H284.5M279.5 493.5V503.5"/>
<path d="M284.5 498.5H331"/>
<path d="M343.5 498.5L330 494.5V503Z M340 498.500L331 496" shape-rendering="auto"/>
<path d="M352.5 491.500L363 506M364 490.500L352 506" shape-rendering="auto"/>
</g></svg></div>
<div style="left:57px;top:100px;width:2px;height:445px;border-left:1px solid #fff;border-right:1px solid #404040;"></div>
<div style="left:58px;top:100px;width:655px;height:1px;background:#404040;"></div>
<div style="left:713px;top:99px;width:1px;height:447px;background:#fff;"></div>
<svg width="0" height="0" style="position:absolute"><defs><pattern id="ck" width="2" height="2" patternUnits="userSpaceOnUse"><rect width="2" height="2" fill="#D4D0C8"/><rect width="1" height="1" fill="#fff"/><rect x="1" y="1" width="1" height="1" fill="#fff"/></pattern></defs></svg>
<div style="left:696px;top:101px;width:16px;height:428px;background:#E9E7E2;"><svg width="16" height="428" style="position:absolute;left:0;top:0" shape-rendering="crispEdges"><rect width="16" height="428" fill="url(#ck)"/></svg></div>
<div style="left:696px;top:101px;width:16px;height:16px;background:#D4D0C8;box-shadow:inset -1px -1px 0 #404040, inset 1px 1px 0 #fff, inset -2px -2px 0 #808080;"></div>
<svg class="ic" style="left:696px;top:101px" width="16" height="16" viewBox="0 0 16 16"><path d="M4 9h7v1h-7zM5 8h5v1h-5zM6 7h3v1h-3zM7 6h1v1h-1z" fill="#000" shape-rendering="crispEdges"/></svg>
<div style="left:696px;top:285px;width:16px;height:16px;background:#D4D0C8;box-shadow:inset -1px -1px 0 #404040, inset 1px 1px 0 #fff, inset -2px -2px 0 #808080;"></div>
<div style="left:696px;top:513px;width:16px;height:16px;background:#D4D0C8;box-shadow:inset -1px -1px 0 #404040, inset 1px 1px 0 #fff, inset -2px -2px 0 #808080;"></div>
<svg class="ic" style="left:696px;top:513px" width="16" height="16" viewBox="0 0 16 16"><path d="M4 7h7v1h-7zM5 8h5v1h-5zM6 9h3v1h-3zM7 10h1v1h-1z" fill="#000" shape-rendering="crispEdges"/></svg>
<div style="left:59px;top:529px;width:654px;height:16px;background:#D4D0C8;"></div>
<div style="left:60px;top:530px;width:18px;height:15px;background:#D4D0C8;box-shadow:inset 1px 1px 0 #fff, inset -1px -1px 0 #808080;"></div>
<svg class="ic" style="left:60px;top:530px" width="18" height="15" viewBox="0 0 18 15"><path d="M5 3.5h2v8h-2z M13 3.5v8L7.5 7.5z" fill="#000"/></svg>
<div style="left:78px;top:530px;width:17px;height:15px;background:#D4D0C8;box-shadow:inset 1px 1px 0 #fff, inset -1px -1px 0 #808080;"></div>
<svg class="ic" style="left:78px;top:530px" width="18" height="15" viewBox="0 0 18 15"><path d="M12 3.5v8L6 7.5z" fill="#000"/></svg>
<div style="left:95px;top:530px;width:18px;height:15px;background:#D4D0C8;box-shadow:inset 1px 1px 0 #fff, inset -1px -1px 0 #808080;"></div>
<svg class="ic" style="left:95px;top:530px" width="18" height="15" viewBox="0 0 18 15"><path d="M6 3.5v8L12 7.5z" fill="#000"/></svg>
<div style="left:113px;top:530px;width:18px;height:15px;background:#D4D0C8;box-shadow:inset 1px 1px 0 #fff, inset -1px -1px 0 #808080;"></div>
<svg class="ic" style="left:113px;top:530px" width="18" height="15" viewBox="0 0 18 15"><path d="M11 3.5h2v8h-2z M5 3.5v8L10.5 7.5z" fill="#000"/></svg>
<div style="left:134px;top:529px;width:200px;height:16px;"><svg width="200" height="16" viewBox="134 529 200 16" style="position:absolute;left:0;top:0">
<path d="M135.5 529L141 544.5H190.5L196 529Z" fill="#000"/>
<path d="M190.500 544.500H250L255.500 529" fill="none" stroke="#000"/>
<path d="M250 544.500H308.500L314.500 529" fill="none" stroke="#000"/>
</svg></div>
<span id="t27" class="t" style="left:143.7px;top:529.49px;font-size:11px;line-height:16px;color:#fff;letter-spacing:0.000px;font-weight:bold;transform:scaleX(1.0322);transform-origin:0 0;">Modello</span>
<span id="t28" class="t" style="left:203.4px;top:529.49px;font-size:11px;line-height:16px;color:#000;letter-spacing:-0.308px;">Layout1</span>
<span id="t29" class="t" style="left:260.9px;top:529.49px;font-size:11px;line-height:16px;color:#000;letter-spacing:-0.008px;">Layout2</span>
<div style="left:479px;top:529px;width:6px;height:16px;background:#D4D0C8;box-shadow:inset 1px 1px 0 #fff, inset -1px -1px 0 #808080;"></div>
<div style="left:485px;top:529px;width:211px;height:16px;background:#E9E7E2;"><svg width="211" height="16" style="position:absolute;left:0;top:0" shape-rendering="crispEdges"><rect width="211" height="16" fill="url(#ck)"/></svg></div>
<div style="left:485px;top:529px;width:16px;height:16px;background:#D4D0C8;box-shadow:inset -1px -1px 0 #404040, inset 1px 1px 0 #fff, inset -2px -2px 0 #808080;"></div>
<svg class="ic" style="left:485px;top:529px" width="16" height="16" viewBox="0 0 16 16"><path d="M9 4v7h1v-7zM8 5v5h1v-5zM7 6v3h1v-3zM6 7v1h1v-1z" fill="#000" shape-rendering="crispEdges"/></svg>
<div style="left:584px;top:529px;width:16px;height:16px;background:#D4D0C8;box-shadow:inset -1px -1px 0 #404040, inset 1px 1px 0 #fff, inset -2px -2px 0 #808080;"></div>
<div style="left:680px;top:529px;width:16px;height:16px;background:#D4D0C8;box-shadow:inset -1px -1px 0 #404040, inset 1px 1px 0 #fff, inset -2px -2px 0 #808080;"></div>
<svg class="ic" style="left:680px;top:529px" width="16" height="16" viewBox="0 0 16 16"><path d="M6 4v7h1v-7zM7 5v5h1v-5zM8 6v3h1v-3zM9 7v1h1v-1z" fill="#000" shape-rendering="crispEdges"/></svg>
<div style="left:4px;top:546px;width:710px;height:1px;background:#fff"></div>
<div style="left:4px;top:547px;width:710px;height:1px;background:#202020"></div>
<div style="left:4px;top:548px;width:710px;height:1px;background:#fff"></div>
<div style="left:4px;top:552px;width:710px;height:1px;background:#202020"></div>
<div style="left:6px;top:555px;width:689px;height:19px;background:#fff;box-shadow:inset 1px 1px 0 #808080, inset -1px -1px 0 #fff, inset 2px 2px 0 #404040, inset -2px -2px 0 #D4D0C8;"></div>
<span id="t30" class="t" style="left:8px;top:558.50px;font-size:13px;line-height:16px;color:#000;letter-spacing:0.072px;font-family:'Liberation Mono',monospace;-webkit-text-stroke:0;">Comando:</span>
<div style="left:14px;top:580px;width:238px;height:15px;box-shadow:inset 1px 1px 0 #808080, inset -1px -1px 0 #fff;"></div>
<span id="t31" class="t" style="left:15.7px;top:579.79px;font-size:11px;line-height:16px;color:#000;letter-spacing:0.028px;white-space:pre;">91.8021,  153.0224, 0.0000</span>
<div style="left:255px;top:580px;width:32px;height:15px;box-shadow:inset 1px 1px 0 #fff, inset -1px -1px 0 #808080;"></div>
<span id="t32" class="t" style="left:255.7px;top:579.79px;font-size:11px;line-height:16px;color:#000;letter-spacing:-0.167px;">SNAP</span>
<div style="left:289px;top:580px;width:47px;height:15px;box-shadow:inset 1px 1px 0 #fff, inset -1px -1px 0 #808080;"></div>
<span id="t33" class="t" style="left:290px;top:579.79px;font-size:11px;line-height:16px;color:#000;letter-spacing:-0.146px;">GRIGLIA</span>
<div style="left:338px;top:580px;width:34px;height:15px;box-shadow:inset 1px 1px 0 #fff, inset -1px -1px 0 #808080;"></div>
<span id="t34" class="t" style="left:339.7px;top:579.79px;font-size:11px;line-height:16px;color:#000;letter-spacing:-0.273px;">ORTO</span>
<div style="left:374px;top:580px;width:47px;height:15px;box-shadow:inset 1px 1px 0 #fff, inset -1px -1px 0 #808080;"></div>
<span id="t35" class="t" style="left:376.2px;top:579.79px;font-size:11px;line-height:16px;color:#000;letter-spacing:-0.373px;">POLARE</span>
<div style="left:423px;top:580px;width:42px;height:15px;box-shadow:inset 1px 1px 0 #fff, inset -1px -1px 0 #808080;"></div>
<span id="t36" class="t" style="left:425.2px;top:579.79px;font-size:11px;line-height:16px;color:#000;letter-spacing:-0.103px;">OSNAP</span>
<div style="left:467px;top:580px;width:88px;height:15px;box-shadow:inset 1px 1px 0 #404040, inset -1px -1px 0 #fff;"></div>
<span id="t37" class="t" style="left:470px;top:579.79px;font-size:11px;line-height:16px;color:#000;letter-spacing:-0.186px;">OPUNTAMENTO</span>
<div style="left:557px;top:580px;width:23px;height:15px;box-shadow:inset 1px 1px 0 #fff, inset -1px -1px 0 #808080;"></div>
<span id="t38" class="t" style="left:558.7px;top:579.79px;font-size:11px;line-height:16px;color:#000;letter-spacing:-0.366px;">SPL</span>
<div style="left:582px;top:580px;width:56px;height:15px;box-shadow:inset 1px 1px 0 #404040, inset -1px -1px 0 #fff;"></div>
<span id="t39" class="t" style="left:585.7px;top:579.79px;font-size:11px;line-height:16px;color:#000;letter-spacing:-0.500px;">MODELLO</span>
</body></html>
